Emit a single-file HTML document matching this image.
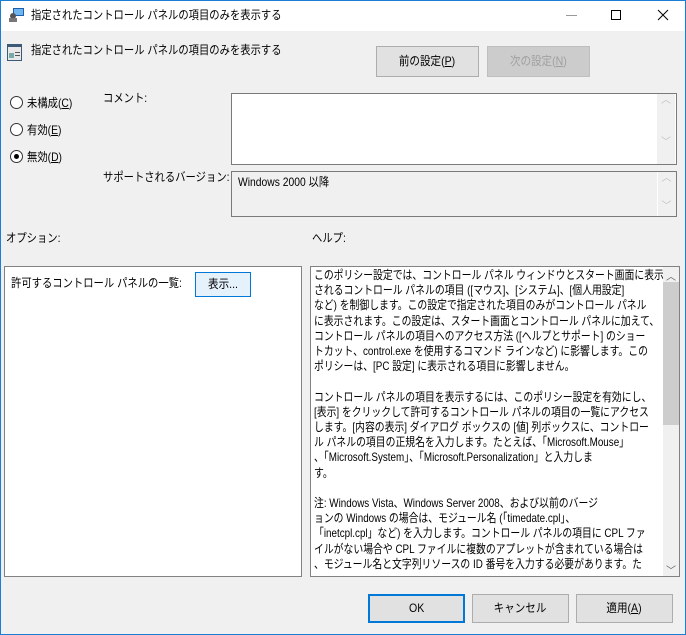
<!DOCTYPE html>
<html><head><meta charset="utf-8"><style>
*{margin:0;padding:0;box-sizing:border-box}
body{width:686px;height:635px;background:#f0f0f0;font-family:"Liberation Sans","Noto Sans CJK JP",sans-serif;font-size:12px;color:#000;position:relative;overflow:hidden}
.a{position:absolute;white-space:nowrap}
.s{transform:scaleX(.86);transform-origin:0 0}
.btn{position:absolute;background:#e1e1e1;border:1px solid #adadad;text-align:center}
.btn span{display:inline-block;transform:scaleX(.88)}
.radio{position:absolute;width:13px;height:13px;border:1px solid #333;border-radius:50%;background:#fff}
u{text-decoration:underline}
</style></head><body>
<div class="a" style="left:0;top:0;width:686px;height:635px;border:1px solid #1a7fd4;border-top:none"></div>
<div class="a" style="left:0;top:0;width:686px;height:31px;background:#fff;border:1px solid #1a7fd4;border-bottom:none"></div>
<svg class="a" style="left:9px;top:8px" width="16" height="14"><rect x="4" y="0" width="11" height="8" fill="#1c5fb0"/><rect x="5" y="1" width="9" height="6" fill="#6fb6ef"/><circle cx="4" cy="8" r="3" fill="#555"/><rect x="0" y="10" width="8" height="4" fill="#777"/></svg>
<div class="a s" style="left:31px;top:7px;line-height:16px">指定されたコントロール パネルの項目のみを表示する</div>
<div class="a" style="left:566px;top:15px;width:11px;height:1px;background:#999"></div>
<div class="a" style="left:611px;top:10px;width:10px;height:10px;border:1px solid #000"></div>
<svg class="a" style="left:657px;top:9px" width="12" height="12"><path d="M1 1L11 11M11 1L1 11" stroke="#000" stroke-width="1"/></svg>

<svg class="a" style="left:7px;top:44px" width="16" height="18"><rect x="0" y="0" width="15" height="17" fill="#3a5a78"/><rect x="1" y="3" width="13" height="13" fill="#e8e8e8"/><rect x="2" y="9" width="5" height="5" fill="#7aa"/><rect x="8" y="8" width="5" height="1" fill="#555"/><rect x="8" y="11" width="5" height="1" fill="#555"/></svg>
<div class="a s" style="left:31px;top:42px;line-height:16px">指定されたコントロール パネルの項目のみを表示する</div>

<div class="btn" style="left:376px;top:46px;width:103px;height:31px;line-height:29px"><span>前の設定(<u>P</u>)</span></div>
<div class="btn" style="left:487px;top:46px;width:103px;height:31px;line-height:29px;background:#cccccc;border-color:#bfbfbf;color:#a0a0a0"><span>次の設定(<u>N</u>)</span></div>

<div class="radio" style="left:10px;top:96px"></div><div class="a s" style="left:27px;top:95px;line-height:16px">未構成(<u>C</u>)</div>
<div class="radio" style="left:10px;top:123px"></div><div class="a s" style="left:27px;top:122px;line-height:16px">有効(<u>E</u>)</div>
<div class="radio" style="left:10px;top:150px"></div><div class="a" style="left:14px;top:154px;width:5px;height:5px;border-radius:50%;background:#000"></div><div class="a s" style="left:27px;top:149px;line-height:16px">無効(<u>D</u>)</div>

<div class="a s" style="left:103px;top:90px;line-height:16px">コメント:</div>
<div class="a" style="left:231px;top:93px;width:446px;height:72px;background:#fff;border:1px solid #7a7a7a"></div>
<div class="a" style="left:657px;top:94px;width:18px;height:70px;background:#f0f0f0;color:#c0c0c0;font-size:10px;text-align:center;line-height:14px">︿<br><br><br>﹀</div>

<div class="a s" style="left:103px;top:169px;line-height:16px">サポートされるバージョン:</div>
<div class="a" style="left:231px;top:171px;width:446px;height:46px;background:#f0f0f0;border:1px solid #7a7a7a"></div>
<div class="a" style="left:657px;top:172px;width:1px;height:44px;background:#fff"></div>
<div class="a" style="left:658px;top:172px;width:17px;height:44px;color:#c0c0c0;font-size:10px;text-align:center;line-height:14px">︿<br><br>﹀</div>
<div class="a s" style="left:238px;top:174px;line-height:16px">Windows 2000 以降</div>

<div class="a s" style="left:6px;top:230px;line-height:16px">オプション:</div>
<div class="a s" style="left:312px;top:230px;line-height:16px">ヘルプ:</div>

<div class="a" style="left:4px;top:266px;width:298px;height:311px;background:#fff;border:1px solid #828282"></div>
<div class="a s" style="left:11px;top:275px;line-height:16px">許可するコントロール パネルの一覧:</div>
<div class="btn" style="left:195px;top:272px;width:56px;height:25px;line-height:23px;background:#e5f1fb;border-color:#0078d7"><span>表示...</span></div>

<div class="a" style="left:310px;top:266px;width:370px;height:311px;background:#fff;border:1px solid #828282;overflow:hidden">
<div class="a s" style="left:3px;top:1px;line-height:15.2px;font-size:12px;transform:scaleX(.82)">このポリシー設定では、コントロール パネル ウィンドウとスタート画面に表示<br>されるコントロール パネルの項目 ([マウス]、[システム]、[個人用設定]<br>など) を制御します。この設定で指定された項目のみがコントロール パネル<br>に表示されます。この設定は、スタート画面とコントロール パネルに加えて、<br>コントロール パネルの項目へのアクセス方法 ([ヘルプとサポート] のショー<br>トカット、control.exe を使用するコマンド ラインなど) に影響します。この<br>ポリシーは、[PC 設定] に表示される項目に影響しません。<br><br>コントロール パネルの項目を表示するには、このポリシー設定を有効にし、<br>[表示] をクリックして許可するコントロール パネルの項目の一覧にアクセス<br>します。[内容の表示] ダイアログ ボックスの [値] 列ボックスに、コントロー<br>ル パネルの項目の正規名を入力します。たとえば、「Microsoft.Mouse」<br>、「Microsoft.System」、「Microsoft.Personalization」と入力しま<br>す。<br><br>注: Windows Vista、Windows Server 2008、および以前のバージ<br>ョンの Windows の場合は、モジュール名 (「timedate.cpl」、<br>「inetcpl.cpl」など) を入力します。コントロール パネルの項目に CPL ファ<br>イルがない場合や CPL ファイルに複数のアプレットが含まれている場合は<br>、モジュール名と文字列リソースの ID 番号を入力する必要があります。た</div>
</div>
<div class="a" style="left:663px;top:267px;width:16px;height:309px;background:#f0f0f0"></div>
<div class="a" style="left:663px;top:282px;width:16px;height:143px;background:#cdcdcd"></div>
<div class="a" style="left:663px;top:268px;width:16px;font-size:10px;color:#606060;text-align:center">︿</div>
<div class="a" style="left:663px;top:562px;width:16px;font-size:10px;color:#606060;text-align:center">﹀</div>

<div class="btn" style="left:368px;top:594px;width:97px;height:29px;line-height:25px;border:2px solid #0078d7;background:#e1e1e1"><span>OK</span></div>
<div class="btn" style="left:472px;top:594px;width:97px;height:29px;line-height:27px"><span>キャンセル</span></div>
<div class="btn" style="left:576px;top:594px;width:97px;height:29px;line-height:27px"><span>適用(<u>A</u>)</span></div>
</body></html>
